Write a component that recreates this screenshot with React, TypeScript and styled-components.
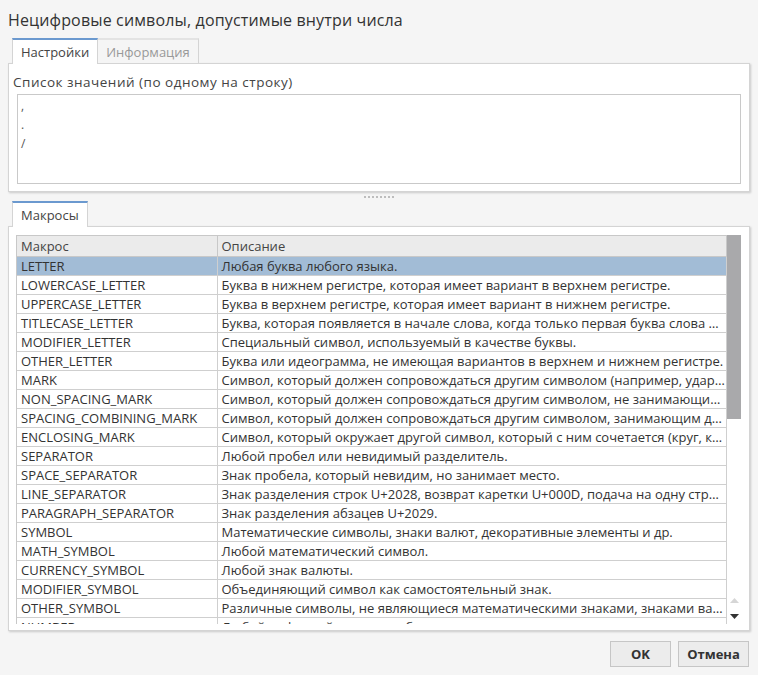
import React from "react";
import styled, { createGlobalStyle } from "styled-components";

const Global = createGlobalStyle`
  html, body { margin: 0; padding: 0; }
  body {
    background: #f5f5f5;
    font-family: "Open Sans", "Noto Sans", sans-serif;
    color: #333;
  }
`;

const Dialog = styled.div`
  width: 758px;
  height: 675px;
  display: flex;
  flex-direction: column;
  box-sizing: border-box;
  overflow: hidden;
`;

const Title = styled.div`
  height: 38px;
  padding: 0 8px;
  display: flex;
  align-items: center;
  font-size: 16px;
  letter-spacing: 0.15px;
  color: #333;
  padding-top: 2px;
  box-sizing: border-box;
`;

const TabBar = styled.div`
  display: flex;
  padding-left: 12px;
  height: 25px;
  position: relative;
  z-index: 1;
`;

const Tab = styled.div<{ $active?: boolean }>`
  height: ${(p) => (p.$active ? "26px" : "25px")};
  box-sizing: border-box;
  padding: 0 8px;
  display: flex;
  align-items: center;
  font-size: 13px;
  color: ${(p) => (p.$active ? "#444" : "#999")};
  background: ${(p) => (p.$active ? "#fff" : "#f5f5f5")};
  border: 1px solid #d4d4d4;
  border-top: 2px solid ${(p) => (p.$active ? "#6b99cf" : "#e3e3e3")};
  border-bottom: none;
  & + & { border-left: none; }
`;

const Panel = styled.div<{ $height: number }>`
  margin: 0 8px;
  height: ${(p) => p.$height}px;
  box-sizing: border-box;
  background: #fff;
  border: 1px solid #d4d4d4;
  box-shadow: 1px 1px 2px rgba(0, 0, 0, 0.18);
  display: flex;
  flex-direction: column;
`;

const FieldLabel = styled.div`
  font-size: 13.5px;
  letter-spacing: 0.5px;
  color: #444;
  height: 18px;
  line-height: 18px;
  padding: 9px 0 3px 4px;
`;

const TextArea = styled.div`
  margin: 0 8px 0 8px;
  height: 90px;
  box-sizing: border-box;
  border: 1px solid #c9c9c9;
  padding: 1px 3px;
  font-size: 12px;
  line-height: 19px;
  color: #555;
  white-space: pre;
`;

const Splitter = styled.div`
  height: 9px;
  display: flex;
  justify-content: center;
  align-items: center;
  gap: 2px;
`;

const Dot = styled.span`
  width: 2px;
  height: 2px;
  background: #bdbdbd;
`;

const TableWrap = styled.div`
  margin: 8px 8px 6px 7px;
  flex: 1;
  display: flex;
  overflow: hidden;
  min-height: 0;
`;

const TableArea = styled.div`
  flex: 1;
  overflow: hidden;
  border-top: 1px solid #c8c8c8;
  border-left: 1px solid #c8c8c8;
`;

const Table = styled.table`
  width: 100%;
  table-layout: fixed;
  border-collapse: collapse;
  font-size: 13px;
`;

const HeadCell = styled.th<{ $w?: number }>`
  width: ${(p) => (p.$w ? `${p.$w}px` : "auto")};
  height: 20px;
  padding: 0 4px;
  text-align: left;
  font-weight: normal;
  color: #444;
  background: #ebebeb;
  border-bottom: 1px solid #c8c8c8;
  border-right: 1px solid #c8c8c8;
  box-sizing: border-box;
`;

const Row = styled.tr<{ $selected?: boolean }>`
  background: ${(p) => (p.$selected ? "#a2bcd6" : "#fff")};
`;

const Cell = styled.td`
  height: 18px;
  padding: 0 1px 0 4px;
  line-height: 18px;
  color: #333;
  border-bottom: 1px solid #cfcfcf;
  border-right: 1px solid #cfcfcf;
  white-space: nowrap;
  overflow: hidden;
  text-overflow: ellipsis;
`;

const ScrollBar = styled.div`
  width: 14px;
  display: flex;
  flex-direction: column;
  background: #fff;
`;

const Thumb = styled.div`
  height: 184px;
  background: #a9a9ab;
`;

const Track = styled.div`
  flex: 1;
`;

const Arrow = styled.div`
  height: 16px;
  display: flex;
  align-items: center;
  justify-content: center;
`;

const Footer = styled.div`
  flex: 1;
  display: flex;
  justify-content: flex-end;
  align-items: flex-start;
  padding: 10px 9px 0 0;
  gap: 7px;
`;

const Button = styled.button<{ $w: number }>`
  width: ${(p) => p.$w}px;
  height: 26px;
  background: #ececec;
  border: 1px solid #c6c6c6;
  font-family: "Open Sans", sans-serif;
  font-weight: bold;
  font-size: 13px;
  color: #333;
  padding: 0;
`;

const rows: [string, string][] = [
  ["LETTER", "Любая буква любого языка."],
  ["LOWERCASE_LETTER", "Буква в нижнем регистре, которая имеет вариант в верхнем регистре."],
  ["UPPERCASE_LETTER", "Буква в верхнем регистре, которая имеет вариант в нижнем регистре."],
  ["TITLECASE_LETTER", "Буква, которая появляется в начале слова, когда только первая буква слова пишется с заглавной буквы."],
  ["MODIFIER_LETTER", "Специальный символ, используемый в качестве буквы."],
  ["OTHER_LETTER", "Буква или идеограмма, не имеющая вариантов в верхнем и нижнем регистре."],
  ["MARK", "Символ, который должен сопровождаться другим символом (например, ударение, умлаут и т. д.)."],
  ["NON_SPACING_MARK", "Символ, который должен сопровождаться другим символом, не занимающий дополнительного места."],
  ["SPACING_COMBINING_MARK", "Символ, который должен сопровождаться другим символом, занимающим дополнительное место."],
  ["ENCLOSING_MARK", "Символ, который окружает другой символ, который с ним сочетается (круг, квадрат и т. д.)."],
  ["SEPARATOR", "Любой пробел или невидимый разделитель."],
  ["SPACE_SEPARATOR", "Знак пробела, который невидим, но занимает место."],
  ["LINE_SEPARATOR", "Знак разделения строк U+2028, возврат каретки U+000D, подача на одну строку U+000A."],
  ["PARAGRAPH_SEPARATOR", "Знак разделения абзацев U+2029."],
  ["SYMBOL", "Математические символы, знаки валют, декоративные элементы и др."],
  ["MATH_SYMBOL", "Любой математический символ."],
  ["CURRENCY_SYMBOL", "Любой знак валюты."],
  ["MODIFIER_SYMBOL", "Объединяющий символ как самостоятельный знак."],
  ["OTHER_SYMBOL", "Различные символы, не являющиеся математическими знаками, знаками валют или модификаторами."],
  ["NUMBER", "Любой цифровой символ любого языка."],
];

export default function App() {
  return (
    <Dialog>
      <Global />
      <Title>Нецифровые символы, допустимые внутри числа</Title>
      <TabBar>
        <Tab $active>Настройки</Tab>
        <Tab>Информация</Tab>
      </TabBar>
      <Panel $height={129}>
        <FieldLabel>Список значений (по одному на строку)</FieldLabel>
        <TextArea>{",\n.\n/"}</TextArea>
      </Panel>
      <Splitter>
        {Array.from({ length: 8 }).map((_, i) => (
          <Dot key={i} />
        ))}
      </Splitter>
      <TabBar>
        <Tab $active>Макросы</Tab>
      </TabBar>
      <Panel $height={405}>
        <TableWrap>
          <TableArea>
            <Table>
              <thead>
                <tr>
                  <HeadCell $w={200}>Макрос</HeadCell>
                  <HeadCell>Описание</HeadCell>
                </tr>
              </thead>
              <tbody>
                {rows.map(([k, d], i) => (
                  <Row key={k} $selected={i === 0}>
                    <Cell>{k}</Cell>
                    <Cell>{d}</Cell>
                  </Row>
                ))}
              </tbody>
            </Table>
          </TableArea>
          <ScrollBar>
            <Thumb />
            <Track />
            <Arrow>
              <svg width="9" height="5" viewBox="0 0 9 5">
                <path d="M0 5 L4.5 0 L9 5 Z" fill="#d6d6d6" />
              </svg>
            </Arrow>
            <Arrow>
              <svg width="9" height="5" viewBox="0 0 9 5">
                <path d="M0 0 L9 0 L4.5 5 Z" fill="#333" />
              </svg>
            </Arrow>
          </ScrollBar>
        </TableWrap>
      </Panel>
      <Footer>
        <Button $w={61}>OK</Button>
        <Button $w={71}>Отмена</Button>
      </Footer>
    </Dialog>
  );
}
